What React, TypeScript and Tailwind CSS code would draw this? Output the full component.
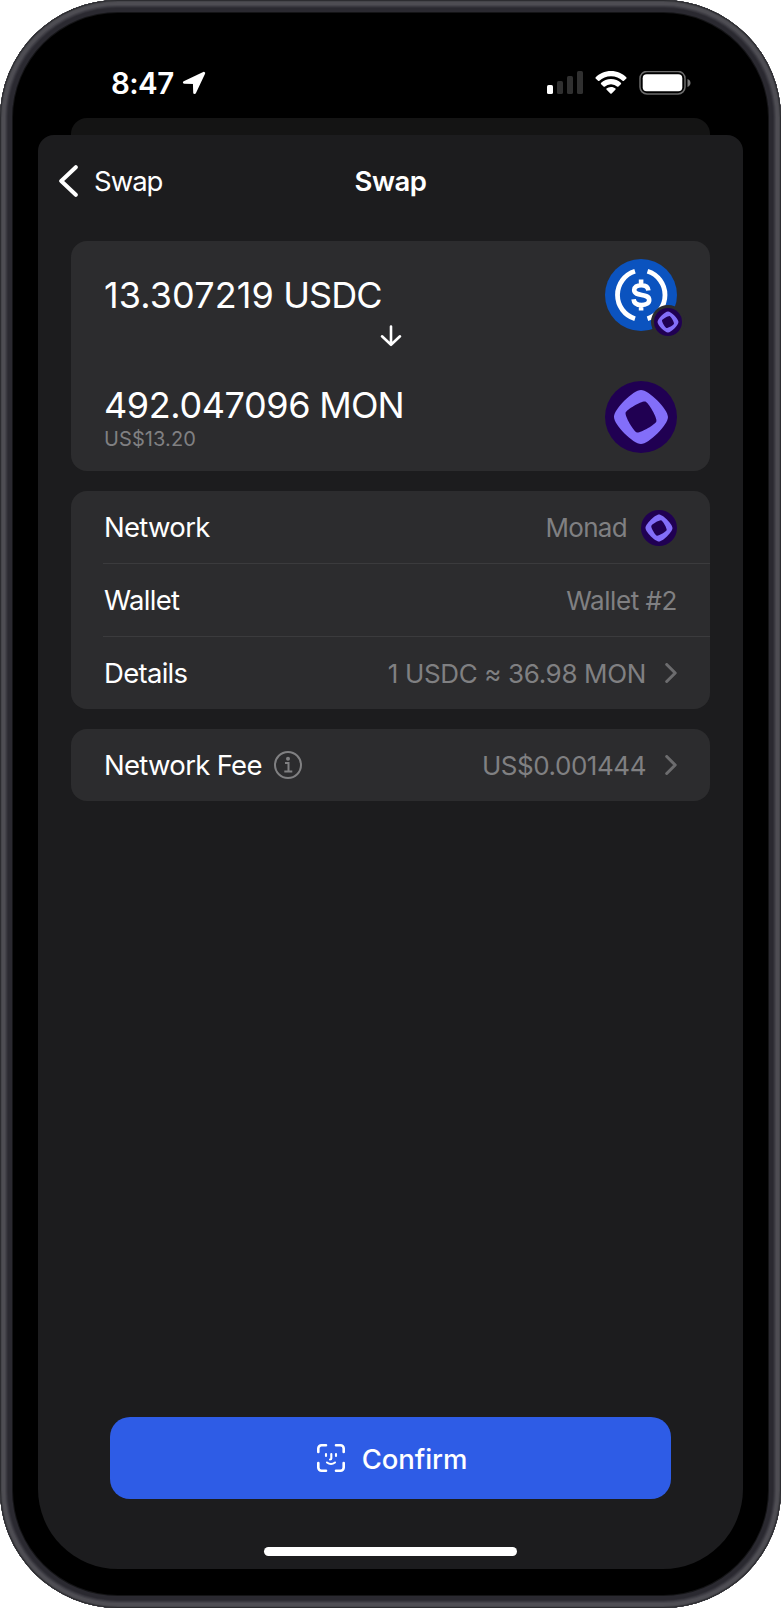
import type { ReactNode } from 'react';

function MonadIcon({ className }: { className: string }) {
    return (
        <svg viewBox="0 0 72 72" className={className}>
            <circle cx="36" cy="36" r="36" fill="#200052" />
            <path
                fill="#836ef9"
                fillRule="evenodd"
                d="M36 9C28.2 9 9 28.2 9 36s19.2 27 27 27 27-19.2 27-27S43.8 9 36 9Zm-4.200 42.400c-3.300-.9-12.100-16.300-11.200-19.600s16.300-12.100 19.600-11.200 12.100 16.300 11.200 19.600-16.300 12.100-19.600 11.200Z"
            />
        </svg>
    );
}

function UsdcIcon() {
    return (
        <svg viewBox="0 0 72 72" className="size-[72px]">
            <circle cx="36" cy="36" r="36" fill="#0b53bf" />
            <path
                d="M30 12.300a24.800 24.800 0 0 0 0 47.400M42.500 12.300a24.800 24.800 0 0 1 0 47.400"
                fill="none"
                stroke="#fff"
                strokeWidth="4.800"
            />
            <path
                d="M36.100 20.500v5M36.100 46.500v5M43.400 31.500c-.3-3.400-3-5.300-7.200-5.300-4.100 0-7 1.800-7 4.900 0 7.200 15 2.600 15 9.900 0 3.100-3 5-7.700 5-4.600 0-7.600-2-7.900-5.800"
                fill="none"
                stroke="#fff"
                strokeWidth="4.600"
            />
        </svg>
    );
}

function Chevron() {
    return (
        <svg viewBox="0 0 12 20" className="-mt-px ml-[19px] h-5 w-3" fill="none" stroke="#6c6c6e" strokeWidth="3" strokeLinecap="round" strokeLinejoin="round">
            <path d="M1.700 1.500 10.200 10l-8.500 8.500" />
        </svg>
    );
}

function StatusBar() {
    return (
        <div className="flex h-[41px] items-center justify-between pr-[52px] pl-[73px]">
            <div className="flex items-center gap-2">
                <span className="pt-[2px] text-[29.500px] font-semibold tracking-[-0.600px]">8:47</span>
                <svg viewBox="0 0 24 24" className="size-6" fill="#fff" stroke="#fff" strokeWidth="2.800" strokeLinejoin="round">
                    <path d="M21.800 2.200 2.300 11.400l10 .3.300 10Z" />
                </svg>
            </div>
            <div className="flex items-center">
                <svg viewBox="0 0 36 24" className="h-6 w-9">
                    <rect x="0" y="14" width="6" height="9" rx="1.600" fill="#fff" />
                    <rect x="10" y="10" width="6" height="13" rx="1.600" fill="#303030" />
                    <rect x="20" y="5" width="6" height="18" rx="1.600" fill="#303030" />
                    <rect x="30" y="0" width="6" height="23" rx="1.600" fill="#303030" />
                </svg>
                <svg viewBox="0 0 32 24" className="ml-3 h-6 w-8" fill="#fff">
                    <path d="M16 0C22.200 0 27.700 2.500 31.500 6.500l.1.8-2.900 2.800-.8 0A17.400 17.400 0 0 0 16 5.300 17.400 17.400 0 0 0 4.100 10.100l-.8 0L.4 7.300.5 6.500C4.300 2.500 9.800 0 16 0Z" />
                    <path d="M16 8.100c3.900 0 7.500 1.500 10.100 4l0 .9-2.900 2.800-.8 0A9.300 9.300 0 0 0 16 13.200a9.300 9.300 0 0 0-6.400 2.600l-.8 0-2.900-2.800 0-.9A14.500 14.500 0 0 1 16 8.100Z" />
                    <path d="M16 16c1.800 0 3.400.6 4.600 1.600l0 .8-4.200 4.300-.8 0-4.200-4.300 0-.8A7.200 7.200 0 0 1 16 16Z" />
                </svg>
                <svg viewBox="0 0 52 24" className="ml-3 h-6 w-[52px]">
                    <rect x="1" y=".4" width="45" height="22.500" rx="7" fill="none" stroke="#6b6b6b" strokeWidth="1.500" />
                    <rect x="3.700" y="3.200" width="39.600" height="17" rx="4" fill="#fff" />
                    <path d="M48.500 8c2 .8 3 2.200 3 4s-1 3.200-3 4Z" fill="#7a7a7a" />
                </svg>
            </div>
        </div>
    );
}

function Row({ label, children }: { label: ReactNode; children: ReactNode }) {
    return (
        <div className="ml-8 flex h-[73px] items-center justify-between border-b border-[#3b3b3d] pt-px pr-[33px] pl-px last:h-[72px] last:border-b-0">
            <div className="flex items-center text-[27.500px] tracking-[-0.700px]">{label}</div>
            <div className="flex items-center text-[26px] tracking-[-0.450px] text-[#808082]">{children}</div>
        </div>
    );
}

export default function App() {
    return (
        <div className="h-[1608px] w-[781px] bg-white font-['Inter',sans-serif] text-white">
            <div className="h-full rounded-[118px] bg-black px-[38px] pt-[62px] pb-[39px] shadow-[inset_0_0_0_1px_#2c2c30,inset_0_0_0_2px_#45454a,inset_0_0_0_5px_#4e4d53,inset_0_0_0_6px_#45444b,inset_0_0_0_7px_#3a3940,inset_0_0_0_8px_#302f36,inset_0_0_0_12px_#2a2930,inset_0_0_0_13px_#141416]">
                <div className="flex h-full flex-col">
                    <StatusBar />
                    {/* Edge of the sheet underneath */}
                    <div className="mx-[33px] mt-[15px] h-[17px] shrink-0 rounded-t-[16px] bg-[#141414]" />

                    <main className="flex min-h-0 flex-1 flex-col rounded-t-[16px] rounded-b-[80px] bg-[#1c1c1e]">
                        <header className="grid h-[92px] grid-cols-3 items-center px-[21px]">
                            <button className="flex items-center gap-4 text-[27.500px] tracking-[-1px]">
                                <svg viewBox="0 0 19 32" className="h-8 w-[19px]" fill="none" stroke="#fff" strokeWidth="4" strokeLinecap="round" strokeLinejoin="round">
                                    <path d="M16.800 2.200 2.200 16l14.600 13.800" />
                                </svg>
                                <span className="pt-[2px]">Swap</span>
                            </button>
                            <h1 className="pt-[2px] text-center text-[27.500px] font-semibold tracking-[-0.500px]">Swap</h1>
                        </header>

                        <section className="mx-[33px] mt-[14px] flex h-[230px] flex-col rounded-[16px] bg-[#2c2c2e] pr-[33px] pl-[33px]">
                            <div className="flex h-[83px] justify-between pt-[18px]">
                                <p className="mt-[14px] text-[36px] leading-[44px] tracking-[-0.900px]">
                                    <span className="tracking-[0.100px]">13.307219</span> USDC
                                </p>
                                <div className="relative size-[72px]">
                                    <UsdcIcon />
                                    <div className="absolute -right-[8px] -bottom-[8px] rounded-full bg-[#2c2c2e] p-[3px]">
                                        <MonadIcon className="size-7" />
                                    </div>
                                </div>
                            </div>
                            <svg viewBox="0 0 22 22" className="mx-auto mt-px size-[22px]" fill="none" stroke="#fff" strokeWidth="2.600" strokeLinejoin="round" strokeLinecap="round">
                                <path d="M11 1.500v18M2 11.300l9 8.500 9-8.500" />
                            </svg>
                            <div className="flex justify-between pt-[34px]">
                                <div className="mt-[2px]">
                                    <p className="text-[36px] leading-[44px] tracking-[-0.900px]">
                                        <span className="tracking-[-0.400px]">492.047096</span> MON
                                    </p>
                                    <p className="mt-px text-[20px] leading-[22px] tracking-[0.100px] text-[#808082]">US$13.20</p>
                                </div>
                                <MonadIcon className="size-[72px]" />
                            </div>
                        </section>

                        <section className="mx-[33px] mt-5 rounded-[16px] bg-[#2c2c2e]">
                            <Row label={<span className="pt-px">Network</span>}>
                                <span className="tracking-[-0.700px]">Monad</span>
                                <MonadIcon className="ml-[14px] size-9" />
                            </Row>
                            <Row label={<span className="pt-px">Wallet</span>}>Wallet #2</Row>
                            <Row label={<span className="pt-px">Details</span>}>
                                <span className="tracking-[-0.350px]">1 USDC ≈ 36.98 MON</span>
                                <Chevron />
                            </Row>
                        </section>

                        <section className="mx-[33px] mt-5 rounded-[16px] bg-[#2c2c2e]">
                            <Row
                                label={
                                    <>
                                        <span className="pt-px">Network Fee</span>
                                        <svg viewBox="0 0 28 28" className="-mt-px ml-3 size-7" fill="none" stroke="#808082" strokeWidth="2">
                                            <circle cx="14" cy="14" r="13" />
                                            <path d="M11 12h3.500v8.500M10.300 20.500h8" />
                                            <circle cx="14" cy="7.800" r="1" fill="#808082" />
                                        </svg>
                                    </>
                                }
                            >
                                US$0.001444
                                <Chevron />
                            </Row>
                        </section>

                        <button className="mx-[72px] mt-auto flex h-[82px] items-center justify-center gap-[17px] rounded-[20px] bg-[#2e5ce6] pl-[3px] text-[27.500px] font-medium tracking-[-0.100px]">
                            <svg viewBox="0 0 28 28" className="size-7" fill="none" stroke="#fff" strokeWidth="2.600" strokeLinecap="round">
                                <path d="M1.300 8V4.500a3.200 3.200 0 0 1 3.200-3.200H9M19 1.300h4.500a3.200 3.200 0 0 1 3.200 3.200V8M26.700 19v4.500a3.200 3.200 0 0 1-3.200 3.200H19M9 26.700H4.500a3.200 3.200 0 0 1-3.200-3.200V19" />
                                <path strokeWidth="2.100" d="M9 10v2M19 10v2M14.300 10v4.500q0 1-1.300 1M10 18.500q4 3 8 0" />
                            </svg>
                            <span className="pt-[3px]">Confirm</span>
                        </button>
                        <div className="mx-auto mt-[48px] mb-[13px] h-[9px] w-[253px] shrink-0 rounded-full bg-white" />
                    </main>
                </div>
            </div>
        </div>
    );
}
